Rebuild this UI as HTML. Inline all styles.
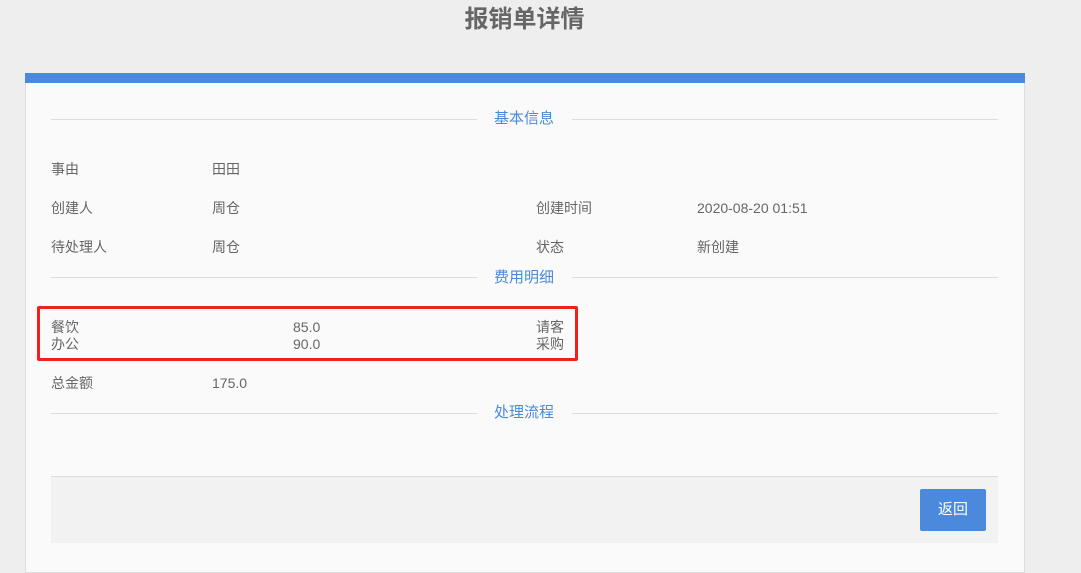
<!DOCTYPE html>
<html><head><meta charset="utf-8"><style>
*{margin:0;padding:0;box-sizing:border-box}
body{width:1081px;height:560px;background:#eeeeee;font-family:"Liberation Sans","Noto Sans CJK SC",sans-serif;font-size:14px;color:#666;position:relative;overflow:hidden}
.a{position:absolute;white-space:nowrap;line-height:16px}
.t{position:absolute;left:0;width:1049px;text-align:center;top:5px;font-size:24px;font-weight:bold;color:#666;line-height:30px}
.card{position:absolute;left:25px;top:73px;width:1000px;height:500px;background:#fafafa;border:1px solid #ddd;border-top:none}
.bar{position:absolute;left:25px;top:73px;width:1000px;height:10px;background:#4a89dc}
.hr{position:absolute;height:1px;background:#ddd}
.s{position:absolute;color:#4a89dc;font-size:15px;line-height:16px}
.red{position:absolute;left:37px;top:306px;width:541px;height:55px;border:3px solid #f0201a;border-radius:2px}
.foot{position:absolute;left:51px;top:476px;width:947px;height:67px;background:#f2f2f2;border-top:1px solid #ddd}
.btn{position:absolute;left:920px;top:489px;width:66px;height:42px;background:#4a89dc;border-radius:2px;color:#fff;font-size:15px;text-align:center;line-height:42px}
</style></head><body>
<div class="t">报销单详情</div>
<div class="card"></div>
<div class="bar"></div>
<div class="hr" style="left:51px;top:119px;width:426px"></div>
<div class="hr" style="left:572px;top:119px;width:426px"></div>
<div class="s" style="left:494px;top:111px">基本信息</div>
<div class="a" style="left:51px;top:161px">事由</div>
<div class="a" style="left:212px;top:161px">田田</div>
<div class="a" style="left:51px;top:200px">创建人</div>
<div class="a" style="left:212px;top:200px">周仓</div>
<div class="a" style="left:536px;top:200px">创建时间</div>
<div class="a" style="left:697px;top:200px">2020-08-20 01:51</div>
<div class="a" style="left:51px;top:239px">待处理人</div>
<div class="a" style="left:212px;top:239px">周仓</div>
<div class="a" style="left:536px;top:239px">状态</div>
<div class="a" style="left:697px;top:239px">新创建</div>
<div class="hr" style="left:51px;top:277px;width:426px"></div>
<div class="hr" style="left:572px;top:277px;width:426px"></div>
<div class="s" style="left:494px;top:270px">费用明细</div>
<div class="red"></div>
<div class="a" style="left:51px;top:319px">餐饮</div>
<div class="a" style="left:293px;top:319px">85.0</div>
<div class="a" style="left:536px;top:319px">请客</div>
<div class="a" style="left:51px;top:336px">办公</div>
<div class="a" style="left:293px;top:336px">90.0</div>
<div class="a" style="left:536px;top:336px">采购</div>
<div class="a" style="left:51px;top:375px">总金额</div>
<div class="a" style="left:212px;top:375px">175.0</div>
<div class="hr" style="left:51px;top:413px;width:426px"></div>
<div class="hr" style="left:572px;top:413px;width:426px"></div>
<div class="s" style="left:494px;top:405px">处理流程</div>
<div class="foot"></div>
<div class="btn">返回</div>
</body></html>
